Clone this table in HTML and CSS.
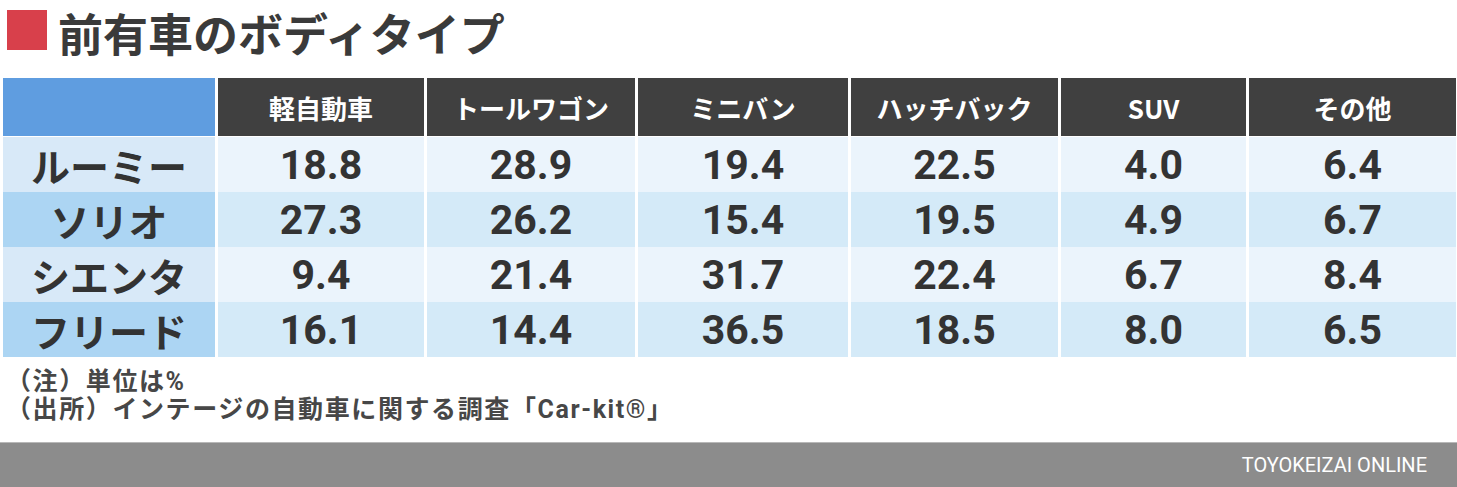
FILE: index.html
```html
<!DOCTYPE html>
<html lang="ja">
<head>
<meta charset="utf-8">
<title>前有車のボディタイプ</title>
<link rel="stylesheet" href="styles.css">
</head>
<body>
<div class="page">
  <header class="title">
    <span class="title-mark"></span>
    <h1 class="title-text">前有車のボディタイプ</h1>
  </header>

  <div class="table">
    <div class="hcell corner"></div>
    <div class="hcell">軽自動車</div>
    <div class="hcell">トールワゴン</div>
    <div class="hcell">ミニバン</div>
    <div class="hcell">ハッチバック</div>
    <div class="hcell">SUV</div>
    <div class="hcell">その他</div>

    <div class="label odd">ルーミー</div>
    <div class="cell odd">18.8</div>
    <div class="cell odd">28.9</div>
    <div class="cell odd">19.4</div>
    <div class="cell odd">22.5</div>
    <div class="cell odd">4.0</div>
    <div class="cell odd">6.4</div>

    <div class="label even">ソリオ</div>
    <div class="cell even">27.3</div>
    <div class="cell even">26.2</div>
    <div class="cell even">15.4</div>
    <div class="cell even">19.5</div>
    <div class="cell even">4.9</div>
    <div class="cell even">6.7</div>

    <div class="label odd">シエンタ</div>
    <div class="cell odd">9.4</div>
    <div class="cell odd">21.4</div>
    <div class="cell odd">31.7</div>
    <div class="cell odd">22.4</div>
    <div class="cell odd">6.7</div>
    <div class="cell odd">8.4</div>

    <div class="label even">フリード</div>
    <div class="cell even">16.1</div>
    <div class="cell even">14.4</div>
    <div class="cell even">36.5</div>
    <div class="cell even">18.5</div>
    <div class="cell even">8.0</div>
    <div class="cell even">6.5</div>
  </div>

  <div class="notes">
    <p>（注）単位は%</p>
    <p>（出所）インテージの自動車に関する調査「Car-kit®」</p>
  </div>

  <footer class="footer">TOYOKEIZAI ONLINE</footer>
</div>
</body>
</html>
```

FILE: styles.css
```css
* { box-sizing: border-box; }

html, body {
  margin: 0;
  padding: 0;
  background: #ffffff;
}

body {
  font-family: Roboto, "Noto Sans CJK JP", "Noto Sans", sans-serif;
  color: #333333;
}

.page {
  width: 1457px;
  height: 487px;
  display: flex;
  flex-direction: column;
  overflow: hidden;
}

.title {
  display: flex;
  align-items: center;
  padding-left: 7px;
  margin-bottom: 13px;
}

.title-mark {
  width: 40px;
  height: 40px;
  margin-top: -5px;
  background: #d8404b;
  flex: none;
}

.title-text {
  margin: 0 0 0 11px;
  font-family: "Noto Sans CJK JP", sans-serif;
  font-size: 45px;
  font-weight: 700;
  color: #3a3a3a;
  line-height: normal;
  letter-spacing: 0;
}

.table {
  display: grid;
  grid-template-columns: 212px 206px 208px 210px 207px 185px 207px;
  grid-template-rows: 59px 55px 55px 55px 55px;
  column-gap: 3px;
  margin-left: 3px;
}

.hcell {
  background: #404040;
  color: #ffffff;
  font-family: "Noto Sans CJK JP", sans-serif;
  font-weight: 700;
  font-size: 26px;
  display: flex;
  align-items: center;
  justify-content: center;
  margin-bottom: 1px;
}

.hcell.corner {
  background: #5f9de0;
}

.label {
  font-family: "Noto Sans CJK JP", sans-serif;
  font-weight: 700;
  font-size: 39px;
  color: #333333;
  display: flex;
  align-items: center;
  justify-content: center;
}

.label.odd { background: #d8e9f8; }
.label.even { background: #acd5f3; }

.cell {
  font-family: Roboto, sans-serif;
  font-weight: 700;
  font-size: 41px;
  color: #333333;
  display: flex;
  align-items: center;
  justify-content: center;
}

.cell.odd { background: #ebf4fc; }
.cell.even { background: #d4eaf8; }

.notes {
  margin: 11px 0 0 6px;
  font-family: Roboto, "Noto Sans CJK JP", sans-serif;
  font-weight: 700;
  font-size: 25px;
  line-height: 28px;
  letter-spacing: 1.6px;
  color: #474747;
}

.notes p {
  margin: 0;
}

.footer {
  margin-top: auto;
  height: 45px;
  background: #8c8c8c;
  border-top: 1px solid #b8b8b8;
  color: #ffffff;
  font-family: Roboto, sans-serif;
  font-size: 20px;
  display: flex;
  align-items: center;
  justify-content: flex-end;
  padding-right: 30px;
}
```
